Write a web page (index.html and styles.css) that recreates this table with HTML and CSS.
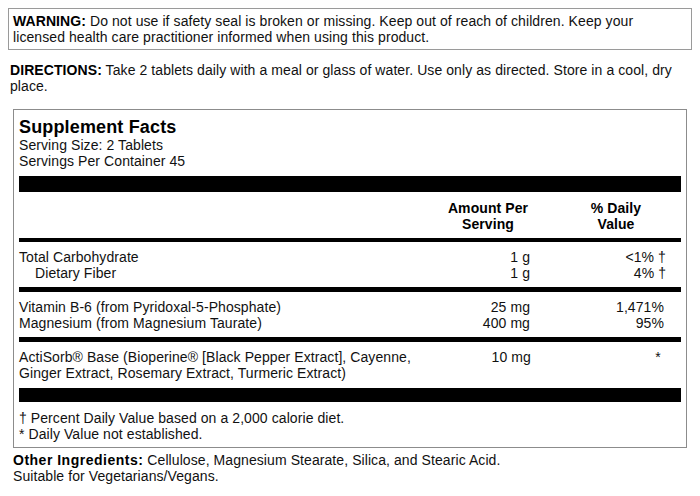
FILE: index.html
```html
<!DOCTYPE html>
<html lang="en">
<head>
<meta charset="utf-8">
<title>Supplement Facts</title>
<link rel="stylesheet" href="styles.css">
</head>
<body>
<div class="warning"><b>WARNING:</b> Do not use if safety seal is broken or missing. Keep out of reach of children. Keep your licensed health care practitioner informed when using this product.</div>

<p class="directions"><b>DIRECTIONS:</b> Take 2 tablets daily with a meal or glass of water. Use only as directed. Store in a cool, dry place.</p>

<section class="facts">
  <h1 class="facts-title">Supplement Facts</h1>
  <div class="serving">Serving Size: 2 Tablets<br>Servings Per Container 45</div>
  <div class="bar-top"></div>
  <div class="row head">
    <div class="name"></div>
    <div class="amt">Amount Per<br>Serving</div>
    <div class="dv">% Daily<br>Value</div>
  </div>
  <div class="group">
    <div class="row"><div class="name">Total Carbohydrate</div><div class="amt">1 g</div><div class="dv">&lt;1% †</div></div>
    <div class="row"><div class="name sub">Dietary Fiber</div><div class="amt">1 g</div><div class="dv">4% †</div></div>
  </div>
  <div class="group">
    <div class="row"><div class="name">Vitamin B-6 (from Pyridoxal-5-Phosphate)</div><div class="amt">25 mg</div><div class="dv"><span class="nd">1,471%</span></div></div>
    <div class="row"><div class="name">Magnesium (from Magnesium Taurate)</div><div class="amt">400 mg</div><div class="dv"><span class="nd">95%</span></div></div>
  </div>
  <div class="group last">
    <div class="row"><div class="name">ActiSorb® Base (Bioperine® [Black Pepper Extract], Cayenne,<br>Ginger Extract, Rosemary Extract, Turmeric Extract)</div><div class="amt">10 mg</div><div class="dv"><span class="star">*</span></div></div>
  </div>
  <div class="bar-bottom"></div>
  <div class="notes">† Percent Daily Value based on a 2,000 calorie diet.<br>* Daily Value not established.</div>
</section>

<p class="other"><b class="other-label">Other Ingredients:</b> Cellulose, Magnesium Stearate, Silica, and Stearic Acid.<br>Suitable for Vegetarians/Vegans.</p>
</body>
</html>
```

FILE: styles.css
```css
html, body {
  background: #fff;
}
body {
  margin: 8px;
  font-family: "Liberation Sans", Arial, sans-serif;
  font-size: 14px;
  line-height: 16px;
  letter-spacing: 0.08px;
  color: #111;
}
b {
  color: #000;
}
.warning {
  border: 1px solid #9a9a9a;
  padding: 4px 4px 4px 4px;
}
.directions {
  margin: 12px 0 0 0;
  padding-left: 2px;
}
.facts {
  margin: 15px 5px 0 5px;
  border: 1px solid #8c8c8c;
  padding: 7px 5px 5px 5px;
}
.facts-title {
  margin: 0;
  font-size: 18px;
  line-height: 20px;
  font-weight: bold;
  letter-spacing: 0.15px;
  color: #000;
}
.bar-top {
  margin-top: 7px;
  height: 16px;
  background: #000;
}
.row {
  display: grid;
  grid-template-columns: 1fr 84px 100px;
  column-gap: 36px;
  padding-right: 15px;
}
.name {
  white-space: nowrap;
}
.head {
  padding: 8px 15px 6px 0;
  border-bottom: 4px solid #000;
  font-weight: bold;
  color: #000;
}
.head .amt, .head .dv {
  text-align: center;
}
.group {
  padding: 7px 0 6px 0;
  border-bottom: 5px solid #000;
}
.group.last {
  border-bottom: 0;
}
.amt, .dv {
  text-align: right;
}
.sub {
  padding-left: 16px;
}
.nd {
  padding-right: 2px;
}
.star {
  padding-right: 6px;
}
.bar-bottom {
  margin-top: 1px;
  height: 14px;
  background: #000;
}
.notes {
  margin-top: 8px;
}
.other {
  margin: 4px 0 0 5px;
}
.other-label {
  letter-spacing: 0.5px;
}
```
